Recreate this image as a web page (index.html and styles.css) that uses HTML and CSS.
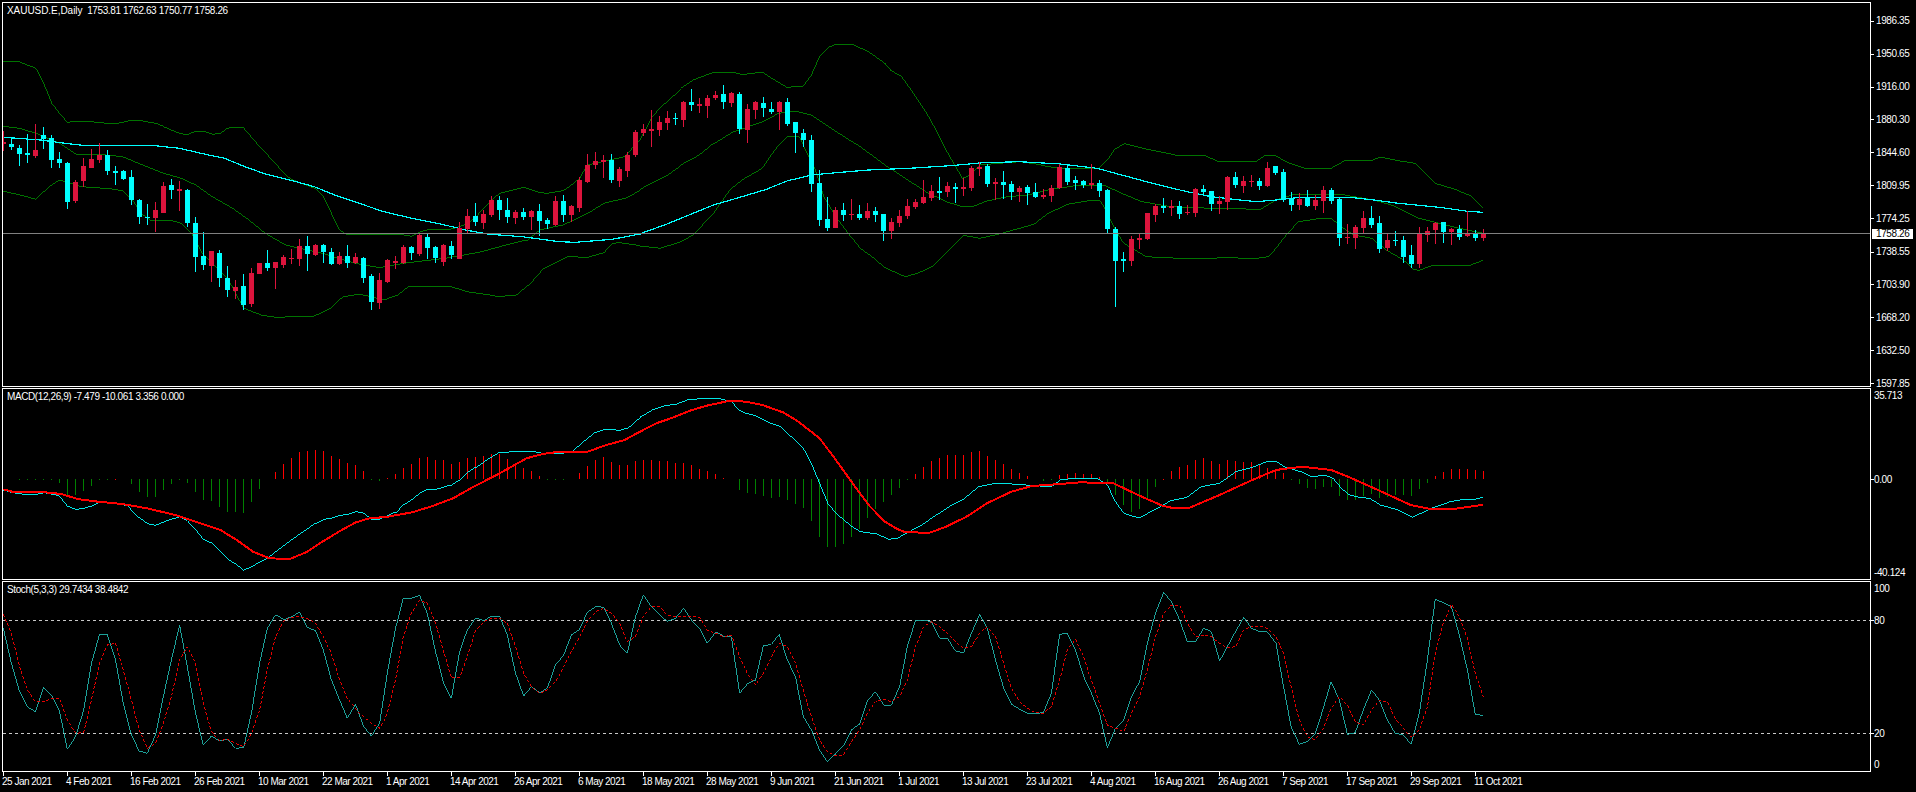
FILE: index.html
```html
<!DOCTYPE html>
<html lang="en">
<head>
    <meta charset="UTF-8">
    <title>XAUUSD.E,Daily</title>
    <link rel="stylesheet" href="styles.css">
</head>
<body>
    <div class="terminal">
        <section class="pane pane-price">
            <div class="plot">
                <svg id="price-plot" class="plot-svg" viewBox="3 3 1867 383"></svg>
                <div class="legend"><span class="legend-name">XAUUSD.E,Daily</span>  1753.81 1762.63 1750.77 1758.26</div>
            </div>
            <div class="axis" id="price-axis"></div>
        </section>
        <section class="pane pane-macd">
            <div class="plot">
                <svg id="macd-plot" class="plot-svg" viewBox="3 389 1867 190"></svg>
                <div class="legend">MACD(12,26,9) -7.479 -10.061 3.356 0.000</div>
            </div>
            <div class="axis axis-sub" id="macd-axis"></div>
        </section>
        <section class="pane pane-stoch">
            <div class="plot">
                <svg id="stoch-plot" class="plot-svg" viewBox="3 582 1867 189"></svg>
                <div class="legend">Stoch(5,3,3) 29.7434 38.4842</div>
            </div>
            <div class="axis axis-sub" id="stoch-axis"></div>
        </section>
        <div class="time-axis" id="time-axis"></div>
    </div>
    <script src="chart.js"></script>
</body>
</html>
```

FILE: styles.css
```css
* {
    box-sizing: border-box;
}

html, body {
    margin: 0;
    height: 100%;
    background: #000;
    overflow: hidden;
}

body {
    font-family: "Liberation Sans", Arial, sans-serif;
    font-size: 10px;
    letter-spacing: -0.4px;
    line-height: 10px;
    color: #fff;
}

.terminal {
    display: flex;
    flex-direction: column;
    gap: 1px;
    padding: 2px 0 0 2px;
}

.pane {
    display: flex;
}

.pane-price {
    height: 385px;
}

.pane-macd {
    height: 192px;
}

.pane-stoch {
    height: 191px;
}

.plot {
    position: relative;
    flex: none;
    width: 1869px;
    border: 1px solid #fff;
}

.plot-svg {
    display: block;
    width: 100%;
    height: 100%;
    shape-rendering: crispEdges;
}

.legend {
    position: absolute;
    left: 4px;
    top: 3px;
    white-space: pre;
}

.legend-name {
    letter-spacing: -0.05px;
}

.axis {
    position: relative;
    flex: 1;
}

.axis-label {
    position: absolute;
    left: 5px;
    white-space: nowrap;
}

.axis-sub .axis-label {
    left: 3px;
}

.axis-tick {
    position: absolute;
    left: 0;
    width: 3px;
    height: 1px;
    background: #fff;
}

.axis-label.current {
    left: 1px;
    width: 41px;
    height: 10px;
    padding-left: 4px;
    background: #fff;
    color: #000;
}

.time-axis {
    display: flex;
    margin-top: -1px;
    padding-left: 1px;
    height: 21px;
    letter-spacing: -0.5px;
}

.time-cell {
    flex: none;
    width: 64px;
    white-space: nowrap;
}

.time-cell::before {
    content: "";
    display: block;
    width: 1px;
    height: 4px;
    background: #fff;
    margin-bottom: 1px;
}

.time-cell span {
    display: block;
    margin-left: -1px;
}

.band {
    fill: none;
    stroke: #008000;
    stroke-width: 0.9;
}

.ma {
    fill: none;
    stroke: #00ffff;
    stroke-width: 1.2;
}

.macd-main {
    fill: none;
    stroke: #00ffff;
    stroke-width: 0.9;
}

.macd-signal {
    fill: none;
    stroke: #ff0000;
    stroke-width: 2;
}

.stoch-main {
    fill: none;
    stroke: #20b2aa;
    stroke-width: 0.9;
}

.stoch-signal {
    fill: none;
    stroke: #ff0000;
    stroke-width: 0.9;
    stroke-dasharray: 3 2;
}

.level {
    stroke: #c8c8c8;
    stroke-width: 1;
    stroke-dasharray: 3 3;
}

.price-line {
    stroke: #808080;
    stroke-width: 1;
}
```

FILE: chart.js
```js
// everything below was read off the chart in steps of 1/3 px vertically
const NS = 'http://www.w3.org/2000/svg';
const BAR = 8, FIRST_X = 3;
const LEFT = [0, 640, 1276];
const SUB_TOP = 380;

// type high bodyTop bodyBottom low
const CANDLES = `
r 393 425 431 453;c 412 432 441 450;c 435 444 462 497;c 402 459 465 489;r 372 450 468 473;
c 381 405 417 447;c 405 414 480 503;c 457 477 489 504;c 487 490 606 627;r 540 546 603 608;
r 474 498 543 562;r 447 477 504 504;r 430 466 480 488;c 450 465 513 525;c 498 513 519 555;
c 510 513 537 540;c 510 531 600 615;c 597 600 651 672;c 612 651 654 675;r 606 630 654 696;
r 546 558 639 639;c 537 555 570 597;r 543 567 573 633;c 567 569 669 681;c 651 669 771 816;
c 696 768 795 810;r 753 753 797 846;c 750 759 834 861;c 798 834 870 891;r 840 861 873 897;
c 822 858 915 930;r 804 819 912 921;r 789 789 822 822;c 750 789 804 813;r 786 786 804 867;
r 765 771 795 804;r 747 774 777 792;r 717 738 777 798;c 708 738 762 813;r 732 735 765 768;
c 732 735 756 789;c 744 756 792 795;r 756 768 792 795;c 735 768 789 804;r 759 771 789 792;
c 771 774 834 849;c 822 828 906 930;r 819 840 909 927;r 777 780 846 849;r 768 783 789 807;
r 735 741 789 792;c 738 741 759 780;r 702 705 762 768;c 702 711 744 777;c 738 741 774 789;
r 732 735 786 798;c 723 738 765 777;r 666 684 777 777;r 627 648 687 702;c 609 648 666 678;
r 630 642 669 687;r 588 600 645 651;c 588 600 630 660;c 594 630 651 669;r 630 636 654 672;
c 624 636 651 660;r 630 633 651 690;c 612 633 663 708;c 654 660 672 687;r 588 603 675 678;
c 585 603 645 666;r 615 618 645 666;r 531 540 624 636;r 462 495 546 549;r 456 483 495 507;
r 465 480 486 534;c 462 480 540 549;r 501 507 543 561;r 456 465 513 531;r 390 396 465 471;
r 372 387 399 408;r 330 387 393 441;r 348 366 390 408;r 333 354 369 390;c 339 354 357 375;
r 303 306 360 381;c 267 306 315 333;r 294 312 318 339;r 285 294 318 354;r 273 285 294 300;
c 255 282 306 327;r 276 279 309 321;c 276 282 387 402;r 312 327 390 429;r 303 306 330 357;
c 291 309 324 351;c 306 327 336 342;r 303 306 336 390;c 294 306 372 378;c 366 366 399 459;
c 387 399 420 441;c 405 420 552 576;c 510 549 660 678;c 591 657 684 693;r 621 630 684 684;
c 609 630 645 663;r 597 642 645 660;c 615 642 654 660;r 609 633 654 660;c 621 633 645 666;
c 642 642 693 723;r 654 666 693 717;r 630 648 669 681;r 597 618 648 657;r 597 606 621 627;
r 540 591 609 612;r 555 573 594 603;c 531 573 579 600;r 546 558 576 591;c 549 561 567 609;
r 534 561 567 588;r 498 504 564 573;r 486 501 507 528;c 492 498 552 561;r 534 546 552 600;
c 513 546 555 597;c 543 552 576 600;r 558 564 576 606;c 555 561 579 615;c 549 576 591 594;
r 567 585 591 597;r 555 564 588 606;r 492 501 564 567;c 495 504 546 555;c 528 540 549 570;
c 540 543 555 564;r 492 549 555 567;c 540 549 573 591;c 567 570 687 702;c 681 687 783 921;
c 756 777 783 816;r 708 717 783 798;r 699 714 720 747;r 639 639 717 720;r 612 618 645 666;
c 594 618 624 639;r 600 618 624 648;c 603 618 642 657;r 615 636 639 645;r 564 567 639 651;
c 555 567 576 582;c 573 573 612 633;r 588 603 612 642;r 528 531 606 630;c 516 531 555 564;
r 528 543 558 579;r 525 543 546 561;c 534 543 558 570;r 486 504 558 561;c 498 498 519 525;
c 507 516 600 606;c 576 597 615 633;r 579 597 615 630;c 570 594 618 621;r 585 600 618 630;
r 558 570 603 639;c 564 570 603 612;c 594 597 714 738;r 672 711 714 732;r 675 681 714 747;
r 633 654 684 702;c 618 654 675 684;c 648 669 747 759;r 699 720 744 753;c 693 720 723 738;
c 708 720 771 789;c 735 765 792 804;r 681 702 792 804;r 681 693 705 726;r 666 669 690 732;
c 666 666 696 729;r 684 687 696 735;c 675 687 711 720;r 633 702 708 711;c 690 702 714 723;
r 687 702 714 723`;

const BAND_UPPER = [
    '8,184 48,186 88,205 107,250 127,310 146,340 165,367 185,364 224,365 263,370 292,369 322,361 341,361 381,370 400,380 440,400 459,404 479,394 498,394 522,403 540,400 557,385 577,381 597,384 636,440 675,490 695,520 714,538 773,566 792,590 812,640 832,690 851,705 900,703 980,703 1008,709 1028,696 1047,690 1106,687 1145,672 1165,652 1185,625 1204,600 1224,580 1283,562 1322,578 1341,580 1380,572 1400,555 1420,535 1439,495 1530,470 1560,430',
    '0,420 30,350 60,310 100,265 130,240 180,217 230,217 250,224 300,216 320,233 360,262 400,258 420,225 440,170 460,143 480,133 520,133 560,155 600,190 615,212 640,228 670,280 710,355 750,450 790,535 800,530 830,495 880,490 930,485 975,493 1000,500 1030,505 1125,505 1145,480 1165,445 1185,430 1240,447 1320,467 1380,465 1420,486 1510,484 1530,467',
    '0,468 30,488 70,505 135,505 170,481 235,481 255,471 300,482 340,490 390,550 430,565 480,590 508,625'
];
const BAND_MID = [
    '8,379 48,385 88,400 146,430 185,462 244,463 300,470 360,500 400,520 440,533 480,555 520,590 570,625 610,660 650,700 700,735 735,745 790,760 870,790 930,803 988,790 1090,775 1150,762 1180,755 1240,735 1290,720 1320,690 1380,675 1440,640 1480,610 1530,595 1568,570',
    '0,568 60,530 100,495 145,465 180,430 220,400 300,365 340,340 380,333 420,345 450,370 500,410 540,440 600,495 650,535 700,575 750,605 790,620 815,620 850,603 900,590 950,585 1000,570 1060,558 1140,557 1180,580 1230,605 1300,620 1400,625 1520,628',
    '0,600 40,585 110,582 155,582 190,590 240,600 290,618 350,655 400,670 450,685 508,700'
];
const BAND_LOWER = [
    '8,574 50,585 88,598 120,560 146,540 200,560 270,566 300,572 325,600 345,640 370,662 420,662 445,670 470,700 495,760 560,840 597,925 640,945 675,952 770,948 810,925 840,890 880,883 910,890 940,900 975,885 1000,860 1105,860 1145,875 1200,885 1220,890 1265,885 1300,850 1330,808 1390,770 1440,772 1480,758 1500,730 1520,728 1568,737',
    '0,738 50,745 100,725 130,705 180,640 220,570 250,540 300,505 330,450 360,410 390,410 430,510 450,590 480,650 510,700 540,745 570,772 600,803 650,830 680,820 715,800 750,760 792,706 832,715 880,702 930,685 965,673 1000,640 1050,612 1100,602 1128,602 1145,640 1165,690 1185,730 1240,770 1320,775 1395,777 1420,773 1510,775 1540,770',
    '0,745 25,705 55,665 110,655 135,655 160,680 190,705 235,715 270,750 305,775 335,808 350,811 385,796 475,796 508,781'
];
const MA = [
    '8,412 100,420 160,430 210,437 370,436 440,445 500,462 550,475 600,500 650,522 710,540 770,560 820,585 880,610 940,635 1010,655 1080,672 1140,690 1200,703 1280,710 1370,725 1410,727 1500,718 1568,702',
    '0,701 60,675 120,645 180,615 250,590 310,568 360,543 420,525 480,518 560,510 660,505 760,497 840,488 930,485 1030,492 1120,505 1180,525 1250,548 1340,575 1400,590 1470,600 1510,605',
    '0,600 60,592 190,593 240,600 300,610 400,622 470,634 508,637'
];

// one value per bar, 298 is the zero line of the pane
const HIST = `
298 298 299 301 301 301 301 308 345 345 333 318 300 300 297 298 312 335 351 352
330 312 299 308 335 360 363 381 396 396 399 366 327 298 276 252 234 216 213 210
213 228 237 249 255 273 300 304 294 282 264 252 234 231 240 240 252 246 234 231
228 222 222 237 249 264 273 288 299 300 300 298 279 258 240 231 246 255 255 243
240 240 243 243 249 249 255 267 273 282 294 298 330 339 342 348 354 351 360 372
384 423 471 501 501 492 471 447 414 387 366 345 324 300 282 261 243 234 225 225
225 216 213 228 240 252 267 279 288 298 303 300 285 282 279 282 282 291 309 345
375 396 387 360 321 297 273 261 255 240 234 243 252 240 243 246 246 255 264 270
279 300 312 324 327 321 321 348 360 360 348 342 354 351 345 345 348 327 309 288
276 267 267 267 270 273`;

const MACD_MAIN = [
    '8,330 30,338 60,343 90,343 110,338 145,347 165,378 185,388 205,385 225,378 244,366 283,370 310,377 340,412 362,431 380,436 410,422 440,410 459,422 480,450 498,478 520,490 558,538 578,552 597,571 616,560 655,535 695,497 734,462 773,430 792,418 812,415 832,406 851,404 871,395 891,400 910,417 930,417 949,408 969,396 988,375 1008,360 1028,340 1047,328 1067,328 1087,320 1106,316 1126,300 1145,278 1165,262 1185,245 1224,217 1302,214 1341,222 1361,220 1400,218 1420,195 1459,156 1480,148 1520,151 1540,143 1568,113',
    '0,112 30,90 60,77 90,72 120,58 190,55 225,65 240,88 260,100 285,108 320,130 345,140 400,205 420,250 440,310 460,370 480,400 520,440 540,455 580,462 610,478 630,475 660,455 690,435 720,410 760,378 790,360 830,320 870,310 900,311 980,318 1010,318 1030,300 1060,295 1120,295 1145,315 1165,365 1185,400 1222,414 1260,390 1300,362 1340,352 1375,320 1420,310 1460,275 1500,262 1540,243',
    '0,243 20,260 60,275 85,290 120,286 140,295 160,325 180,345 200,352 230,355 255,375 295,388 332,411 380,385 430,364 460,358 490,357 508,352'
];
const MACD_SIGNAL = [
    '8,328 30,335 110,337 150,342 190,357 240,365 300,372 360,385 430,405 480,425 540,450 580,480 620,515 660,535 710,537 750,517 790,485 830,455 870,428 900,416 950,410 1010,397 1060,378 1110,355 1160,320 1220,283 1290,235 1330,222 1370,215 1440,215 1480,197 1530,180 1568,155',
    '0,155 40,130 80,113 120,93 160,78 220,62 260,65 300,75 350,97 385,122 440,175 480,240 520,308 560,375 600,425 630,447 650,457 710,458 750,440 800,410 850,370 910,335 960,318 1030,312 1080,307 1160,310 1220,345 1280,377 1305,384 1345,384 1420,345 1500,300',
    '0,270 40,263 70,261 135,270 180,292 250,330 330,375 375,386 440,386 508,374'
];

const STOCH_MAIN = [
    '8,745 28,850 48,935 67,980 87,995 107,922 126,945 146,995 165,1108 185,1070 205,990 224,850 244,763 263,763 283,840 302,970 322,1065 341,1113 361,1120 381,1065 400,950 420,840 440,735 459,860 479,1000 498,1095 518,1068 538,1083 557,1078 577,1105 597,1102 616,1000 636,850 655,745 675,705 695,720 714,710 734,697 753,742 773,752 792,810 812,900 832,960 851,1015 871,973 891,1040 910,1068 930,1030 949,880 969,745 988,655 1008,655 1028,646 1047,700 1067,815 1087,910 1106,955 1126,815 1145,750 1165,715 1185,722 1204,709 1224,709 1243,765 1263,880 1283,948 1302,920 1322,938 1341,925 1361,855 1381,825 1400,765 1420,748 1439,697 1459,680 1479,682 1498,730 1518,795 1537,820 1557,710',
    '8,645 28,680 48,705 67,724 87,715 107,685 126,720 146,745 165,790 185,757 205,770 224,770 244,940 263,912 283,900 302,798 322,793 341,763 361,840 381,890 400,1010 420,1050 440,1110 459,1145 479,1122 498,1098 518,1050 538,1032 557,962 577,935 597,975 616,975 636,920 655,800 675,721 695,721 714,725 734,775 753,775 773,813 792,820 812,760 832,703 851,745 871,840 891,925 910,972 930,988 949,1000 969,1000 988,998 1008,940 1028,763 1047,760 1067,810 1087,890 1106,940 1126,1000 1145,1103 1165,1045 1185,1020 1204,950 1224,905 1243,790 1263,700 1283,637 1302,665 1322,720 1341,785 1361,785 1381,745 1400,755 1420,843 1439,800 1459,755 1479,712 1498,745 1518,755 1537,755',
    '0,790 17,910 37,1040 57,1093 77,1085 96,1062 116,985 135,905 155,960 175,1063 194,1058 214,990 234,930 253,960 273,1020 292,1060 312,1065 331,1093 351,1000 371,840 390,658 410,668 430,680 449,765 469,870 488,1002 508,1007'
];
const STOCH_SIGNAL = [
    '8,703 28,760 48,860 67,930 87,965 107,965 126,955 146,955 165,1020 185,1060 205,1058 224,960 244,850 263,795 283,790 302,870 322,960 341,1050 361,1105 381,1090 400,1030 420,950 440,840 459,800 479,850 498,970 518,1055 538,1082 557,1078 577,1090 597,1100 616,1060 636,990 655,870 675,770 695,722 714,712 734,710 753,715 773,730 792,770 812,820 832,900 851,955 871,985 891,1010 910,1030 930,1045 949,1000 969,900 988,770 1008,700 1028,660 1047,670 1067,730 1087,815 1106,893 1126,893 1145,830 1165,752 1185,725 1204,715 1224,715 1243,730 1263,800 1283,880 1302,920 1322,940 1341,930 1361,905 1381,860 1400,815 1420,770 1439,725 1459,695 1479,685 1498,700 1518,730 1537,785 1557,770',
    '8,710 28,680 48,680 67,705 87,710 107,708 126,708 146,712 165,750 185,760 205,770 224,765 244,830 263,880 283,915 302,880 322,830 341,790 361,800 381,850 400,930 420,1010 440,1080 459,1115 479,1127 498,1125 518,1085 538,1050 557,1000 577,965 597,958 616,965 636,950 655,900 675,800 695,740 714,725 734,740 753,760 773,785 792,805 812,800 832,760 851,740 871,770 891,850 910,925 930,965 949,985 969,998 988,1000 1008,980 1028,900 1047,810 1067,778 1087,830 1106,900 1126,970 1145,1035 1165,1045 1185,1055 1204,1000 1224,950 1243,870 1263,770 1283,700 1302,675 1322,675 1341,730 1361,770 1381,765 1400,770 1420,790 1439,803 1459,800 1479,750 1498,738 1518,738 1537,745',
    '0,770 17,815 37,920 57,1020 77,1070 96,1080 116,1045 135,985 155,950 175,975 194,1025 214,1035 234,990 253,962 273,965 292,1015 312,1045 331,1072 351,1050 371,980 390,820 410,730 430,673 449,710 469,775 488,880 508,950'
];

const PRICE_LABELS = [
    [20.7, '1986.35'], [53.7, '1950.65'], [86.7, '1916.00'], [119.3, '1880.30'],
    [152.3, '1844.60'], [185.3, '1809.95'], [218.3, '1774.25'], [251.7, '1738.55'],
    [284.3, '1703.90'], [317.3, '1668.20'], [350.3, '1632.50'], [383.3, '1597.85']
];
const MACD_LABELS = [[395.7, '35.713', false], [479.3, '0.00', true], [572.7, '-40.124', false]];
const STOCH_LABELS = [[588, '100', false], [620.3, '80', true], [733.3, '20', true], [764.7, '0', false]];
const DATES = [
    '25 Jan 2021', '4 Feb 2021', '16 Feb 2021', '26 Feb 2021', '10 Mar 2021', '22 Mar 2021',
    '1 Apr 2021', '14 Apr 2021', '26 Apr 2021', '6 May 2021', '18 May 2021', '28 May 2021',
    '9 Jun 2021', '21 Jun 2021', '1 Jul 2021', '13 Jul 2021', '23 Jul 2021', '4 Aug 2021',
    '16 Aug 2021', '26 Aug 2021', '7 Sep 2021', '17 Sep 2021', '29 Sep 2021', '11 Oct 2021'
];

function el(tag, attrs) {
    const node = document.createElementNS(NS, tag);
    for (const key in attrs) {
        node.setAttribute(key, attrs[key]);
    }
    return node;
}

// horizontal scale is 2.45 per px in the tables above, vertical is 3
function toPoints(parts, top) {
    const points = [];
    parts.forEach((part, n) => {
        part.split(' ').forEach(pair => {
            const [x, y] = pair.split(',').map(Number);
            points.push((LEFT[n] + x / 2.45).toFixed(1) + ',' + (top + y / 3).toFixed(1));
        });
    });
    return points.join(' ');
}

function addLine(svg, parts, top, cls) {
    svg.appendChild(el('polyline', { points: toPoints(parts, top), class: cls }));
}

function addRect(svg, x, y, w, h, fill) {
    svg.appendChild(el('rect', { x, y, width: w, height: Math.max(h, 1), fill }));
}

function drawCandles(svg) {
    CANDLES.trim().split(/\s*;\s*/).forEach((row, i) => {
        const [type, high, open, close, low] = row.split(' ');
        const color = type === 'r' ? '#dc143c' : '#00ffff';
        const x = FIRST_X + i * BAR;
        const top = Math.round(open / 3);
        const bottom = Math.round(close / 3);
        addRect(svg, x, Math.round(high / 3), 1, Math.round(low / 3) - Math.round(high / 3), color);
        addRect(svg, x - 2, top, 5, bottom - top, color);
    });
}

function drawHistogram(svg) {
    HIST.trim().split(/\s+/).map(Number).forEach((value, i) => {
        const x = FIRST_X + i * BAR;
        const y = Math.round(SUB_TOP + value / 3);
        if (value < 298) {
            addRect(svg, x, y, 1, 479 - y, '#ff0000');
        } else if (value > 298) {
            addRect(svg, x, 479, 1, y - 479, '#008000');
        }
    });
}

function addAxisLabels(id, labels, paneTop) {
    const axis = document.getElementById(id);
    labels.forEach(([y, text, tick]) => {
        const label = document.createElement('span');
        label.className = 'axis-label';
        label.style.top = Math.round(y - paneTop - 4.5) + 'px';
        label.textContent = text;
        axis.appendChild(label);
        if (tick !== false) {
            const mark = document.createElement('i');
            mark.className = 'axis-tick';
            mark.style.top = Math.round(y - paneTop) + 'px';
            axis.appendChild(mark);
        }
    });
}

const priceSvg = document.getElementById('price-plot');
addLine(priceSvg, BAND_UPPER, 0, 'band');
addLine(priceSvg, BAND_MID, 0, 'band');
addLine(priceSvg, BAND_LOWER, 0, 'band');
addLine(priceSvg, MA, 0, 'ma');
drawCandles(priceSvg);
priceSvg.appendChild(el('line', { x1: 3, x2: 1870, y1: 233.5, y2: 233.5, class: 'price-line' }));

const macdSvg = document.getElementById('macd-plot');
drawHistogram(macdSvg);
addLine(macdSvg, MACD_MAIN, SUB_TOP, 'macd-main');
addLine(macdSvg, MACD_SIGNAL, SUB_TOP, 'macd-signal');

const stochSvg = document.getElementById('stoch-plot');
[620.5, 733.5].forEach(y => {
    stochSvg.appendChild(el('line', { x1: 3, x2: 1870, y1: y, y2: y, class: 'level' }));
});
addLine(stochSvg, STOCH_MAIN, SUB_TOP, 'stoch-main');
addLine(stochSvg, STOCH_SIGNAL, SUB_TOP, 'stoch-signal');

addAxisLabels('price-axis', PRICE_LABELS, 2);
addAxisLabels('macd-axis', MACD_LABELS, 388);
addAxisLabels('stoch-axis', STOCH_LABELS, 581);

const current = document.createElement('span');
current.className = 'axis-label current';
current.style.top = '227px';
current.textContent = '1758.26';
document.getElementById('price-axis').appendChild(current);

const timeAxis = document.getElementById('time-axis');
DATES.forEach(date => {
    const cell = document.createElement('div');
    cell.className = 'time-cell';
    const label = document.createElement('span');
    label.textContent = date;
    cell.appendChild(label);
    timeAxis.appendChild(cell);
});
```
